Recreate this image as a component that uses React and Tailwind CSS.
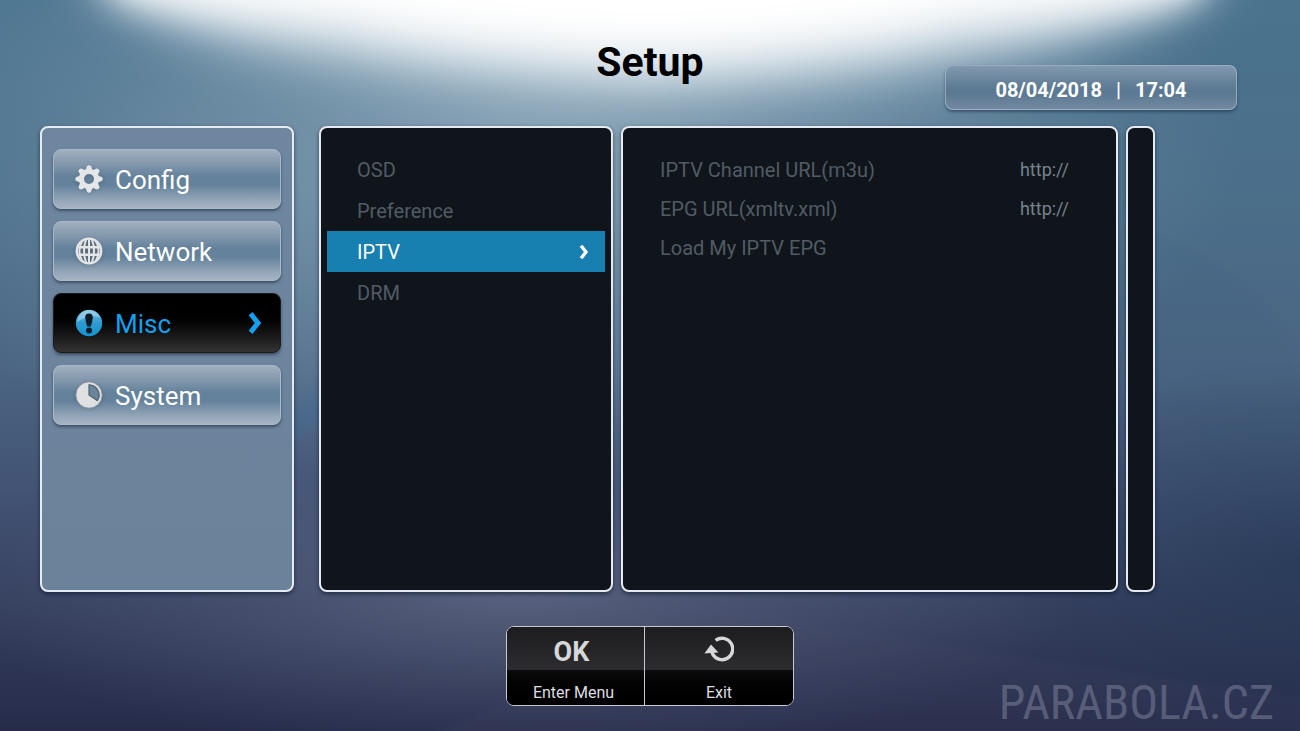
import React, { useState } from 'react';

const GearIcon = () => (
  <svg viewBox="0 0 28 28" className="w-7 h-7 shrink-0 drop-shadow-sm" fill="#e4e6e8">
    <g>
      {[0, 45, 90, 135, 180, 225, 270, 315].map((a) => (
        <path key={a} transform={`rotate(${a} 14 14)`} d="M10.2 6.2 12 1.2Q14 -0.6 16 1.2L17.8 6.2Z" />
      ))}
    </g>
    <path fillRule="evenodd" d="M14 3.8a10.2 10.2 0 1 0 0 20.4a10.2 10.2 0 1 0 0-20.4ZM14 9a5 5 0 1 1 0 10a5 5 0 1 1 0-10Z" />
  </svg>
);

const GlobeIcon = () => (
  <svg viewBox="0 0 28 28" className="w-7 h-7 shrink-0 drop-shadow-sm" fill="none">
    <circle cx="14" cy="14" r="13.4" fill="#e4e6e8" />
    <clipPath id="globe-clip">
      <circle cx="14" cy="14" r="11.2" />
    </clipPath>
    <g clipPath="url(#globe-clip)">
      <circle cx="14" cy="14" r="11.2" fill="#5b6c7e" />
      <g stroke="#e4e6e8" strokeWidth="2">
        <path d="M0 10.2H28M0 17.8H28" strokeWidth="2.6" />
        <path d="M14 0V28" />
        <ellipse cx="14" cy="14" rx="5" ry="13.4" />
        <ellipse cx="14" cy="14" rx="9.6" ry="13.8" />
      </g>
    </g>
  </svg>
);

const AlertIcon = () => (
  <svg viewBox="0 0 28 28" className="w-7 h-7 shrink-0">
    <defs>
      <linearGradient id="alert-fill" x1="0" y1="0" x2="0" y2="1">
        <stop offset="0" stopColor="#7cbfe2" />
        <stop offset="0.5" stopColor="#2d9ad0" />
        <stop offset="1" stopColor="#1294d4" />
      </linearGradient>
    </defs>
    <circle cx="14" cy="14" r="13.2" fill="url(#alert-fill)" />
    <path d="M2 13A12 12 0 0 1 14 1.6Q22 1.6 24.6 8Q14 5 2 13Z" fill="#b4d9ec" opacity="0.55" />
    <path d="M10.2 8.4a3.8 4 0 0 1 7.6 0Q17.4 13 15.8 17.6h-3.6Q10.6 13 10.2 8.4Z" fill="#0b1b26" />
    <circle cx="14" cy="21.4" r="3" fill="#0b1b26" />
  </svg>
);

const PieIcon = () => (
  <svg viewBox="0 0 28 28" className="w-7 h-7 shrink-0 drop-shadow-sm">
    <circle cx="14" cy="14" r="13.2" fill="#dfe0e2" stroke="#7b848e" strokeWidth="0.8" />
    <path d="M14 3.8A10.2 10.2 0 0 1 22.4 19.6L14 14Z" fill="#6a849c" stroke="#4f6172" strokeWidth="1.2" />
  </svg>
);

const Chevron = ({ className }) => (
  <svg viewBox="0 0 14 24" className={className} fill="none" stroke="currentColor" strokeWidth="5">
    <path d="M2.6 2.6 10 12 2.6 21.4" />
  </svg>
);

const ReturnIcon = () => (
  <svg viewBox="0 0 30 26" className="w-[30px] h-[26px]">
    <path d="M11.6 4.4A10.7 10.7 0 1 1 8.8 18.4L8 16" fill="none" stroke="#d6d7d9" strokeWidth="3.4" />
    <path d="M0.4 17.4 7 8.4 14.4 16.6Z" fill="#d6d7d9" />
  </svg>
);

const Backdrop = () => (
  <svg
    viewBox="0 0 1300 731"
    preserveAspectRatio="none"
    className="absolute inset-0 -z-10 w-full h-full"
    aria-hidden="true"
  >
    <defs>
      <linearGradient id="sky" x1="0" y1="0" x2="0" y2="1">
        <stop offset="0" stopColor="#4a738e" />
        <stop offset="0.25" stopColor="#4b6f8a" />
        <stop offset="0.5" stopColor="#4b6583" />
        <stop offset="0.68" stopColor="#425273" />
        <stop offset="0.85" stopColor="#343d5c" />
        <stop offset="1" stopColor="#262b4a" />
      </linearGradient>
      <radialGradient id="haze" cx="0.5" cy="0.5" r="0.5">
        <stop offset="0" stopColor="#9db4c4" stopOpacity="0.75" />
        <stop offset="0.5" stopColor="#8ba6b9" stopOpacity="0.45" />
        <stop offset="1" stopColor="#7a98b0" stopOpacity="0" />
      </radialGradient>
      <radialGradient id="warm" cx="0.5" cy="0.5" r="0.5">
        <stop offset="0" stopColor="#6a748e" stopOpacity="0.65" />
        <stop offset="1" stopColor="#5a6482" stopOpacity="0" />
      </radialGradient>
      <radialGradient id="shade" cx="0.5" cy="0.5" r="0.5">
        <stop offset="0" stopColor="#1c3350" stopOpacity="0.5" />
        <stop offset="1" stopColor="#1c3350" stopOpacity="0" />
      </radialGradient>
      <filter id="wide" x="-20%" y="-60%" width="140%" height="220%">
        <feGaussianBlur stdDeviation="28 26" />
      </filter>
      <filter id="soft" x="-20%" y="-60%" width="140%" height="220%">
        <feGaussianBlur stdDeviation="18 20" />
      </filter>
      <filter id="edge" x="-10%" y="-10%" width="120%" height="120%">
        <feGaussianBlur stdDeviation="3" />
      </filter>
    </defs>
    <rect width="1300" height="731" fill="url(#sky)" />
    <ellipse cx="540" cy="150" rx="700" ry="350" fill="url(#haze)" />
    <ellipse cx="520" cy="590" rx="560" ry="170" fill="url(#warm)" />
    <ellipse cx="1300" cy="560" rx="320" ry="200" fill="url(#shade)" />
    <path d="M1120 225Q1240 250 1300 350V470Q1230 500 1120 560Z" fill="#2f5474" opacity="0.07" filter="url(#edge)" />
    <path d="M270 440Q300 420 330 355V410Q300 440 270 460Z" fill="#3f6d98" opacity="0.3" filter="url(#edge)" />
    <path d="M360 760Q560 690 700 602Q900 640 1320 700V760Z" fill="#4d4f6c" opacity="0.14" filter="url(#edge)" />
    <path d="M90 -120V-20Q150 40 340 72Q480 98 650 104Q820 98 960 72Q1160 40 1220 -20V-120Z" fill="#bccdd8" opacity="0.7" filter="url(#wide)" />
    <path d="M108 -120V-14Q180 24 340 46Q480 74 650 80Q820 74 960 46Q1130 24 1202 -14V-120Z" fill="#e3ebf0" opacity="0.75" filter="url(#soft)" />
    <path d="M112 -120V-12Q190 8 340 20Q480 48 650 54Q820 48 960 20Q1120 8 1198 -12V-120Z" fill="#ffffff" filter="url(#soft)" />
  </svg>
);

const SECTIONS = [
  { name: 'Config', Icon: GearIcon },
  { name: 'Network', Icon: GlobeIcon },
  { name: 'Misc', Icon: AlertIcon },
  { name: 'System', Icon: PieIcon },
];

const MISC_ITEMS = ['OSD', 'Preference', 'IPTV', 'DRM'];

const URL_FIELDS = [
  { id: 'channel-url', label: 'IPTV Channel URL(m3u)' },
  { id: 'epg-url', label: 'EPG URL(xmltv.xml)' },
];

const App = () => {
  const [section, setSection] = useState('Misc');
  const [item, setItem] = useState('IPTV');
  const [urls, setUrls] = useState({ 'channel-url': 'http://', 'epg-url': 'http://' });

  const panel = 'rounded-lg border-2 border-[#e6ebf2] shadow-[0_2px_4px_rgba(10,20,40,0.6)]';

  return (
    <div className="relative isolate min-h-screen flex flex-col overflow-hidden font-['Roboto',sans-serif]">
      <Backdrop />

      {/* Title and clock */}
      <header className="grid grid-cols-[1fr_auto_1fr] px-[63px] pt-10">
        <h1 className="col-start-2 text-[41px] leading-11 font-bold text-black">Setup</h1>
        <div className="justify-self-end mt-[25px] w-[292px] h-[45px] pt-1 flex items-center justify-center rounded-lg border border-[#a3b6c7]/80 bg-[linear-gradient(to_bottom,#8299ae,#5d7b94_50%,#5a7891_62%,#7289a0)] shadow-[0_2px_3px_rgba(20,40,60,0.5)] text-xl font-bold text-white">
          <time>08/04/2018</time>
          <span className="px-[14px] font-medium">|</span>
          <time>17:04</time>
        </div>
      </header>

      <main className="flex-1 grid grid-cols-[271px_294fr_497fr_29px] gap-2 mt-4 pl-10 pr-[145px]">
        {/* Sections */}
        <nav className={`mr-[17px] px-[11px] pt-[21px] flex flex-col gap-3 bg-linear-to-b from-[#6f86a0] to-[#6b829b] ${panel}`}>
          {SECTIONS.map(({ name, Icon }) => (
            <button
              key={name}
              onClick={() => setSection(name)}
              className={`h-[60px] pl-[21px] pr-[18px] flex items-center gap-3 rounded-lg border text-[26px] text-left shadow-[0_2px_3px_rgba(30,45,65,0.6)] ${
                section === name
                  ? 'border-[#1a1a1a] bg-linear-to-b from-black from-20% to-[#343434] text-[#14a0f0]'
                  : 'border-[#a9b9c8] bg-[linear-gradient(to_bottom,#a0b0c0,#8297ac_25%,#64829c_45%,#64829c_60%,#91a4b6_85%,#a6b4c3)] text-white'
              }`}
            >
              <Icon />
              <span className="flex-1 pt-[2px]">{name}</span>
              {section === name && <Chevron className="w-[14px] h-6" />}
            </button>
          ))}
        </nav>

        {/* Items of the section */}
        <nav className={`px-[6px] pt-[21px] flex flex-col bg-[#0f151b] ${panel}`}>
          {MISC_ITEMS.map((name) => (
            <button
              key={name}
              onClick={() => setItem(name)}
              className={`h-[41px] pl-[30px] pr-4 flex items-center justify-between text-xl ${
                item === name ? 'bg-[#1880b0] text-white' : 'text-[#525b64]'
              }`}
            >
              {name}
              {item === name && <Chevron className="w-[10px] h-4" />}
            </button>
          ))}
        </nav>

        {/* Settings */}
        <section className={`pl-[37px] pr-[47px] pt-[22px] text-xl text-[#525b64] bg-[#0f151b] ${panel}`}>
          {URL_FIELDS.map(({ id, label }) => (
            <div key={id} className="h-[39px] flex items-center justify-between">
              <label htmlFor={id}>{label}</label>
              <input
                id={id}
                type="text"
                value={urls[id]}
                onChange={(e) => setUrls({ ...urls, [id]: e.target.value })}
                className="w-40 bg-transparent text-right text-lg text-[#76828d] outline-none"
              />
            </div>
          ))}
          <button className="h-[39px] flex items-center">Load My IPTV EPG</button>
        </section>

        <div className={`bg-[#0f151b] ${panel}`} />
      </main>

      {/* Key hints */}
      <footer className="flex justify-center mt-[34px] mb-[25px]">
        <div className="flex rounded-lg overflow-hidden border border-[#c6cad4] text-[#dcdde0] text-base">
          <button className="w-[138px] h-[78px] flex flex-col border-r border-[#c6cad4] bg-black">
            <span className="h-[43px] w-full flex items-center justify-center pt-2 pr-2 bg-linear-to-b from-[#1d1d1f] to-[#2d2d2f] text-[27px] font-bold text-[#d6d7d9]">OK</span>
            <span className="flex-1 w-full flex items-end justify-center pr-1 bg-linear-to-b from-[#0c0c0e] to-black">Enter Menu</span>
          </button>
          <button className="w-[148px] h-[78px] flex flex-col bg-black">
            <span className="h-[43px] w-full flex items-center justify-center bg-linear-to-b from-[#1d1d1f] to-[#2d2d2f]">
              <ReturnIcon />
            </span>
            <span className="flex-1 w-full flex items-end justify-center bg-linear-to-b from-[#0c0c0e] to-black">Exit</span>
          </button>
        </div>
      </footer>

      <div className="absolute right-[26px] bottom-0 text-5xl leading-14 text-[#646983]/80 font-['Roboto_Condensed','Liberation_Sans_Narrow',sans-serif]">
        PARABOLA.CZ
      </div>
    </div>
  );
};

export default App;
